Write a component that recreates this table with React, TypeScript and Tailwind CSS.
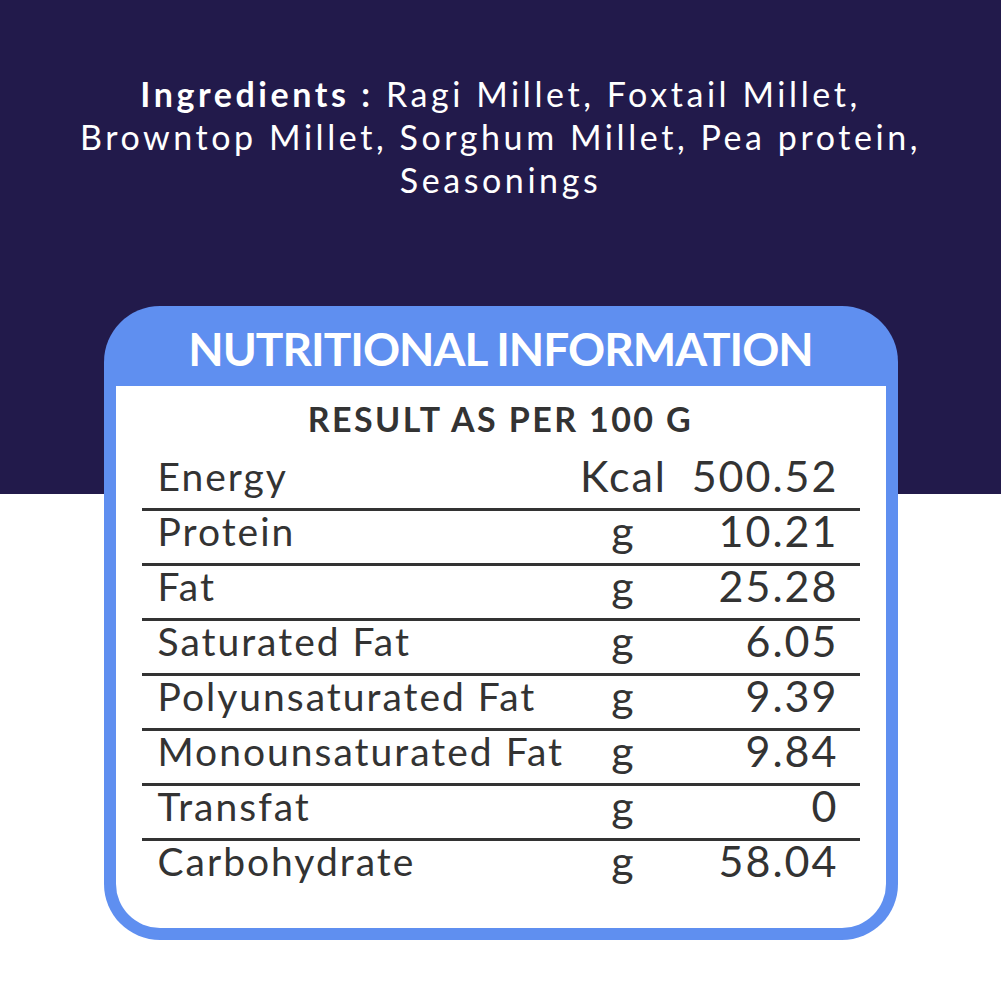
import React from "react";

const rows: { label: string; unit: string; value: string }[] = [
  { label: "Energy", unit: "Kcal", value: "500.52" },
  { label: "Protein", unit: "g", value: "10.21" },
  { label: "Fat", unit: "g", value: "25.28" },
  { label: "Saturated Fat", unit: "g", value: "6.05" },
  { label: "Polyunsaturated Fat", unit: "g", value: "9.39" },
  { label: "Monounsaturated Fat", unit: "g", value: "9.84" },
  { label: "Transfat", unit: "g", value: "0" },
  { label: "Carbohydrate", unit: "g", value: "58.04" },
];

export default function App() {
  return (
    <div
      className="w-full h-[1001px] bg-[linear-gradient(to_bottom,#221a4b_0px,#221a4b_494px,#ffffff_494px)] flex flex-col items-center"
      style={{ fontFamily: "Lato, 'Noto Sans', sans-serif" }}
    >
      <div className="pt-[72px] text-center text-white text-[34px] leading-[43px] tracking-[0.105em] w-[960px]">
        <p>
          <span className="font-bold">Ingredients :</span> Ragi Millet, Foxtail Millet,
        </p>
        <p>Browntop Millet, Sorghum Millet, Pea protein,</p>
        <p>Seasonings</p>
      </div>

      <div className="mt-[105px] w-[794px] rounded-[56px] bg-[#5f8ff0] px-[12px] pb-[12px]">
        <div className="h-[80px] flex items-center justify-center text-white font-bold text-[46px] tracking-[-1px] leading-none pt-[6px]">
          NUTRITIONAL INFORMATION
        </div>
        <div className="bg-white rounded-b-[44px] h-[542px] px-[26px] flex flex-col">
          <div className="h-[70px] flex items-center justify-center text-[#333333] font-bold text-[34px] tracking-[2.4px] leading-none pb-[4px]">
            RESULT AS PER 100 G
          </div>
          {rows.map((r, i) => (
            <div
              key={r.label}
              className={
                "h-[55px] shrink-0 flex items-end pl-[16px] pr-[21px] text-[#333333] " +
                (i < rows.length - 1 ? "border-b-[3px] border-[#333333]" : "border-b-[3px] border-transparent")
              }
            >
              <div className="flex-1 text-[39px] tracking-[2px] leading-[44px] pb-[10px]">{r.label}</div>
              <div className="w-[90px] text-center text-[43px] tracking-[2px] leading-[44px] pb-[10px]">{r.unit}</div>
              <div className="w-[170px] text-right text-[43px] tracking-[2px] leading-[44px] pb-[10px]">{r.value}</div>
            </div>
          ))}
        </div>
      </div>
    </div>
  );
}
